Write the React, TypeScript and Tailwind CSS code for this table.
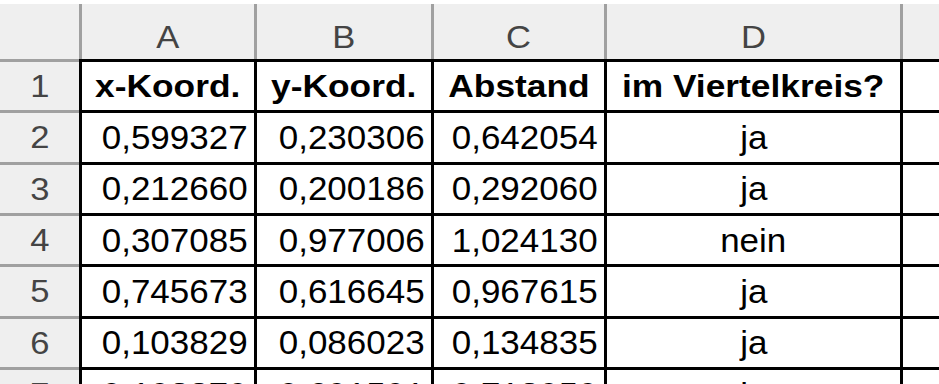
import React from "react";

const colW = ["w-[175px]", "w-[177px]", "w-[173px]", "w-[296px]"];
const letters = ["A", "B", "C", "D"];
const heads = ["x-Koord.", "y-Koord.", "Abstand", "im Viertelkreis?"];
const rows: string[][] = [
  ["0,599327", "0,230306", "0,642054", "ja"],
  ["0,212660", "0,200186", "0,292060", "ja"],
  ["0,307085", "0,977006", "1,024130", "nein"],
  ["0,745673", "0,616645", "0,967615", "ja"],
  ["0,103829", "0,086023", "0,134835", "ja"],
  ["0,193379", "0,691591", "0,713959", "ja"],
];

export default function App() {
  return (
    <div className="h-[384px] w-[939px] overflow-hidden bg-white pt-[4px] font-['Liberation_Sans',Arial,sans-serif]">
      <div className="flex h-[55px] bg-[#efefef] text-[#444]">
        <div className="w-[79px]" />
        {letters.map((l, i) => (
          <div
            key={l}
            className={`${colW[i]} flex items-center justify-center border-l-[3px] border-[#a0a0a0] pt-[10px]`}
          >
            <span className="inline-block origin-center scale-x-[1.08] text-[32px] leading-none">{l}</span>
          </div>
        ))}
        <div className="flex-1 border-l-[3px] border-[#a0a0a0]" />
      </div>

      <div className="flex h-[51.33px]">
        <div className="flex w-[79px] items-center justify-center border-t-[3px] border-[#a0a0a0] bg-[#efefef] text-[#444]">
          <span className="inline-block scale-x-[1.08] text-[32px] leading-none">1</span>
        </div>
        {heads.map((h, i) => (
          <div
            key={h}
            className={`${colW[i]} flex items-center justify-center border-l-[3px] border-t-[3px] border-black text-black`}
          >
            <span className="inline-block origin-center scale-x-[1.14] whitespace-nowrap text-[31px] font-bold leading-none">
              {h}
            </span>
          </div>
        ))}
        <div className="flex-1 border-l-[3px] border-t-[3px] border-black" />
      </div>

      {rows.map((r, ri) => (
        <div key={ri} className="flex h-[51.33px]">
          <div className="flex w-[79px] items-center justify-center border-t-[3px] border-[#a0a0a0] bg-[#efefef] text-[#444]">
            <span className="inline-block scale-x-[1.08] text-[32px] leading-none">{ri + 2}</span>
          </div>
          {r.slice(0, 3).map((v, i) => (
            <div
              key={i}
              className={`${colW[i]} flex items-center justify-end border-l-[3px] border-t-[3px] border-black pr-[6px] text-black`}
            >
              <span className="inline-block origin-right scale-x-[1.06] text-[33px] leading-none">{v}</span>
            </div>
          ))}
          <div className={`${colW[3]} flex items-center justify-center border-l-[3px] border-t-[3px] border-black text-black`}>
            <span className="inline-block origin-center scale-x-[1.06] text-[33px] leading-none">{r[3]}</span>
          </div>
          <div className="flex-1 border-l-[3px] border-t-[3px] border-black" />
        </div>
      ))}
    </div>
  );
}
